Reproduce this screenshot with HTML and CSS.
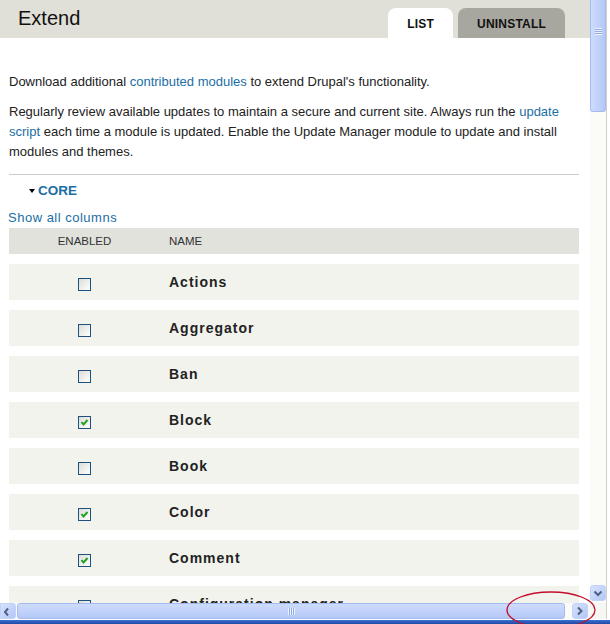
FILE: index.html
```html
<!DOCTYPE html>
<html lang="en">
<head>
    <meta charset="UTF-8">
    <meta name="viewport" content="width=device-width, initial-scale=1.0">
    <title>Extend</title>
    <link rel="stylesheet" href="styles.css">
</head>
<body>
    <div class="frame">
        <div class="frame-body">
            <div class="viewport">
                <header class="page-header">
                    <h1>Extend</h1>
                    <nav class="tabs">
                        <a class="tab is-active" href="#">List</a>
                        <a class="tab" href="#">Uninstall</a>
                    </nav>
                </header>

                <main class="content">
                    <p>Download additional <a href="#">contributed modules</a> to extend Drupal's functionality.</p>
                    <p>Regularly review available updates to maintain a secure and current site. Always run the <a href="#">update script</a> each time a module is updated. Enable the Update Manager module to update and install modules and themes.</p>

                    <div class="package">
                        <div class="package-title"><span class="caret"></span>CORE</div>
                        <a class="show-cols" href="#">Show all columns</a>
                        <table class="modules">
                            <thead>
                                <tr><th class="col-enabled">Enabled</th><th class="col-name">Name</th></tr>
                            </thead>
                            <tbody>
                                <tr class="gap"><td colspan="2"></td></tr>
                                <tr><td class="col-enabled"><span class="check"></span></td><td class="col-name module-name">Actions</td></tr>
                                <tr class="gap"><td colspan="2"></td></tr>
                                <tr><td class="col-enabled"><span class="check"></span></td><td class="col-name module-name">Aggregator</td></tr>
                                <tr class="gap"><td colspan="2"></td></tr>
                                <tr><td class="col-enabled"><span class="check"></span></td><td class="col-name module-name">Ban</td></tr>
                                <tr class="gap"><td colspan="2"></td></tr>
                                <tr><td class="col-enabled"><span class="check"><svg width="11" height="11" viewBox="0 0 11 11"><polyline points="2.5,5 4.5,7.5 8.5,3" fill="none" stroke="#21a121" stroke-width="2"/></svg></span></td><td class="col-name module-name">Block</td></tr>
                                <tr class="gap"><td colspan="2"></td></tr>
                                <tr><td class="col-enabled"><span class="check"></span></td><td class="col-name module-name">Book</td></tr>
                                <tr class="gap"><td colspan="2"></td></tr>
                                <tr><td class="col-enabled"><span class="check"><svg width="11" height="11" viewBox="0 0 11 11"><polyline points="2.5,5 4.5,7.5 8.5,3" fill="none" stroke="#21a121" stroke-width="2"/></svg></span></td><td class="col-name module-name">Color</td></tr>
                                <tr class="gap"><td colspan="2"></td></tr>
                                <tr><td class="col-enabled"><span class="check"><svg width="11" height="11" viewBox="0 0 11 11"><polyline points="2.5,5 4.5,7.5 8.5,3" fill="none" stroke="#21a121" stroke-width="2"/></svg></span></td><td class="col-name module-name">Comment</td></tr>
                                <tr class="gap"><td colspan="2"></td></tr>
                                <tr><td class="col-enabled"><span class="check"></span></td><td class="col-name module-name">Configuration manager</td></tr>
                                <tr class="gap"><td colspan="2"></td></tr>
                                <tr><td class="col-enabled"><span class="check"></span></td><td class="col-name module-name">Contact</td></tr>
                            </tbody>
                        </table>
                    </div>
                </main>
            </div>

            <div class="vscroll">
                <div class="vthumb"><span class="grip-v"></span></div>
                <div class="vtrack"></div>
                <div class="sbtn sbtn-down">
                    <svg width="14" height="14" viewBox="0 0 14 14"><polyline points="3.5,5.5 7,9 10.5,5.5" fill="none" stroke="#4d6185" stroke-width="2"/></svg>
                </div>
            </div>
            <div class="frame-edge"></div>
        </div>

        <div class="hscroll">
            <div class="sbtn sbtn-left">
                <svg width="14" height="14" viewBox="0 0 14 14"><polyline points="7,4.5 4,8 7,11.5" fill="none" stroke="#4d6185" stroke-width="2"/></svg>
            </div>
            <div class="hthumb"><span class="grip-h"></span></div>
            <div class="htrack"></div>
            <div class="sbtn sbtn-right">
                <svg width="14" height="14" viewBox="0 0 14 14"><polyline points="5,3.5 8.5,7 5,10.5" fill="none" stroke="#4d6185" stroke-width="2"/></svg>
            </div>
            <div class="corner"></div>
            <div class="frame-edge"></div>
        </div>
        <div class="frame-bottom"></div>

        <!-- red marker drawn over the screenshot -->
        <svg class="annotation" width="104" height="39" viewBox="0 0 104 39">
            <ellipse cx="51" cy="25" rx="44" ry="18" fill="none" stroke="#c2102c" stroke-width="1.3"/>
        </svg>
    </div>
</body>
</html>
```

FILE: styles.css
```css
* {
    margin: 0;
    padding: 0;
    box-sizing: border-box;
}
body {
    font-family: 'Liberation Sans', Arial, sans-serif;
    font-size: 13px;
    line-height: 20px;
    color: #222;
    background: #fff;
    overflow: hidden;
}
a {
    color: #1a6ea5;
    text-decoration: none;
}
.frame {
    width: 610px;
    height: 624px;
    display: flex;
    flex-direction: column;
    position: relative;
    overflow: hidden;
}
.frame-body {
    display: flex;
    height: 603px;
}
.viewport {
    width: 590px;
    overflow: hidden;
}
.page-header {
    height: 38px;
    background: #e0e0d8;
    display: flex;
    justify-content: space-between;
    align-items: flex-end;
    padding: 0 25px 0 18px;
}
.page-header h1 {
    align-self: flex-start;
    font-size: 20px;
    font-weight: normal;
    line-height: 36px;
    color: #111;
}
.tabs {
    display: flex;
    gap: 5px;
}
.tab {
    display: block;
    height: 30px;
    padding: 2px 19px 0;
    line-height: 28px;
    font-size: 12px;
    font-weight: bold;
    letter-spacing: 0.2px;
    text-transform: uppercase;
    color: #111;
    background: #a7a69f;
    border-radius: 8px 8px 0 0;
}
.tab.is-active {
    background: #fff;
}
.content {
    padding: 0 11px 0 9px;
}
.content p {
    margin-top: 10px;
}
.content p:first-child {
    margin-top: 34px;
}
.package {
    margin-top: 12px;
    border-top: 1px solid #ccc;
}
.package-title {
    display: flex;
    align-items: center;
    margin-top: 6px;
    padding-left: 20px;
    font-size: 13.5px;
    font-weight: bold;
    color: #1a6ea5;
}
.caret {
    width: 0;
    height: 0;
    border-left: 3px solid transparent;
    border-right: 3px solid transparent;
    border-top: 4px solid #000;
    margin-right: 3px;
}
.show-cols {
    display: block;
    width: max-content;
    margin-top: 7px;
    margin-left: -1px;
    letter-spacing: 0.5px;
}
.modules {
    width: 100%;
    border-collapse: collapse;
}
.modules th {
    height: 26px;
    padding: 0;
    background: #e1e2dc;
    font-size: 11.5px;
    font-weight: normal;
    text-transform: uppercase;
    color: #333;
}
.modules td {
    height: 36px;
    padding: 0;
    background: #f3f3ee;
}
.modules .gap td {
    height: 10px;
    background: #fff;
}
.col-enabled {
    width: 151px;
    text-align: center;
}
.modules .col-name {
    text-align: left;
    padding-left: 9px;
}
.module-name {
    font-size: 14px;
    font-weight: bold;
    letter-spacing: 1px;
    color: #222;
}
.check {
    display: block;
    width: 13px;
    height: 13px;
    margin: 5px auto 0;
    border: 1px solid #1c5180;
    background: linear-gradient(135deg, #dcdcd7, #fff);
}
.check svg {
    display: block;
}

/* scrollbars of the frame */
.vscroll {
    width: 16px;
    display: flex;
    flex-direction: column;
    background: #fbfbf8;
}
.vthumb {
    height: 112px;
    display: flex;
    justify-content: center;
    padding-top: 28px;
    background: linear-gradient(90deg, #cddbfd, #bfd0fa 60%, #b4c8f6);
    border: 1px solid #a3bbef;
    border-top: 0;
    border-radius: 0 0 3px 3px;
}
.grip-v {
    width: 7px;
    height: 7px;
    background: repeating-linear-gradient(#eef3fe 0 1px, #8faae6 1px 2px);
}
.vtrack {
    flex: 1;
}
.sbtn {
    width: 16px;
    height: 16px;
    display: flex;
    align-items: center;
    justify-content: center;
    background: linear-gradient(135deg, #d6e1fd, #b3c7f6);
    border: 1px solid #c2d3fb;
    border-radius: 3px;
}
.sbtn-down {
    margin-bottom: 2px;
}
.frame-edge {
    width: 4px;
    background: #fff;
    border-left: 1px solid #d4d0c8;
}
.hscroll {
    height: 17px;
    display: flex;
    background: #fbfbf8;
    border-bottom: 1px solid #fff;
}
.sbtn-left {
    border-radius: 0 3px 3px 0;
    justify-content: flex-start;
}
.hthumb {
    width: 548px;
    margin-left: 1px;
    display: flex;
    align-items: center;
    justify-content: center;
    background: linear-gradient(#cddbfd, #bfd0fa 60%, #b4c8f6);
    border: 1px solid #a3bbef;
    border-radius: 3px;
}
.grip-h {
    width: 7px;
    height: 7px;
    background: repeating-linear-gradient(90deg, #eef3fe 0 1px, #8faae6 1px 2px);
}
.htrack {
    width: 7px;
}
.corner {
    width: 18px;
    background: #f6f6f2;
}
.frame-bottom {
    height: 4px;
    background: linear-gradient(#3b6fd3, #1d4aa3);
}
.annotation {
    position: absolute;
    left: 500px;
    top: 585px;
    pointer-events: none;
}
```
